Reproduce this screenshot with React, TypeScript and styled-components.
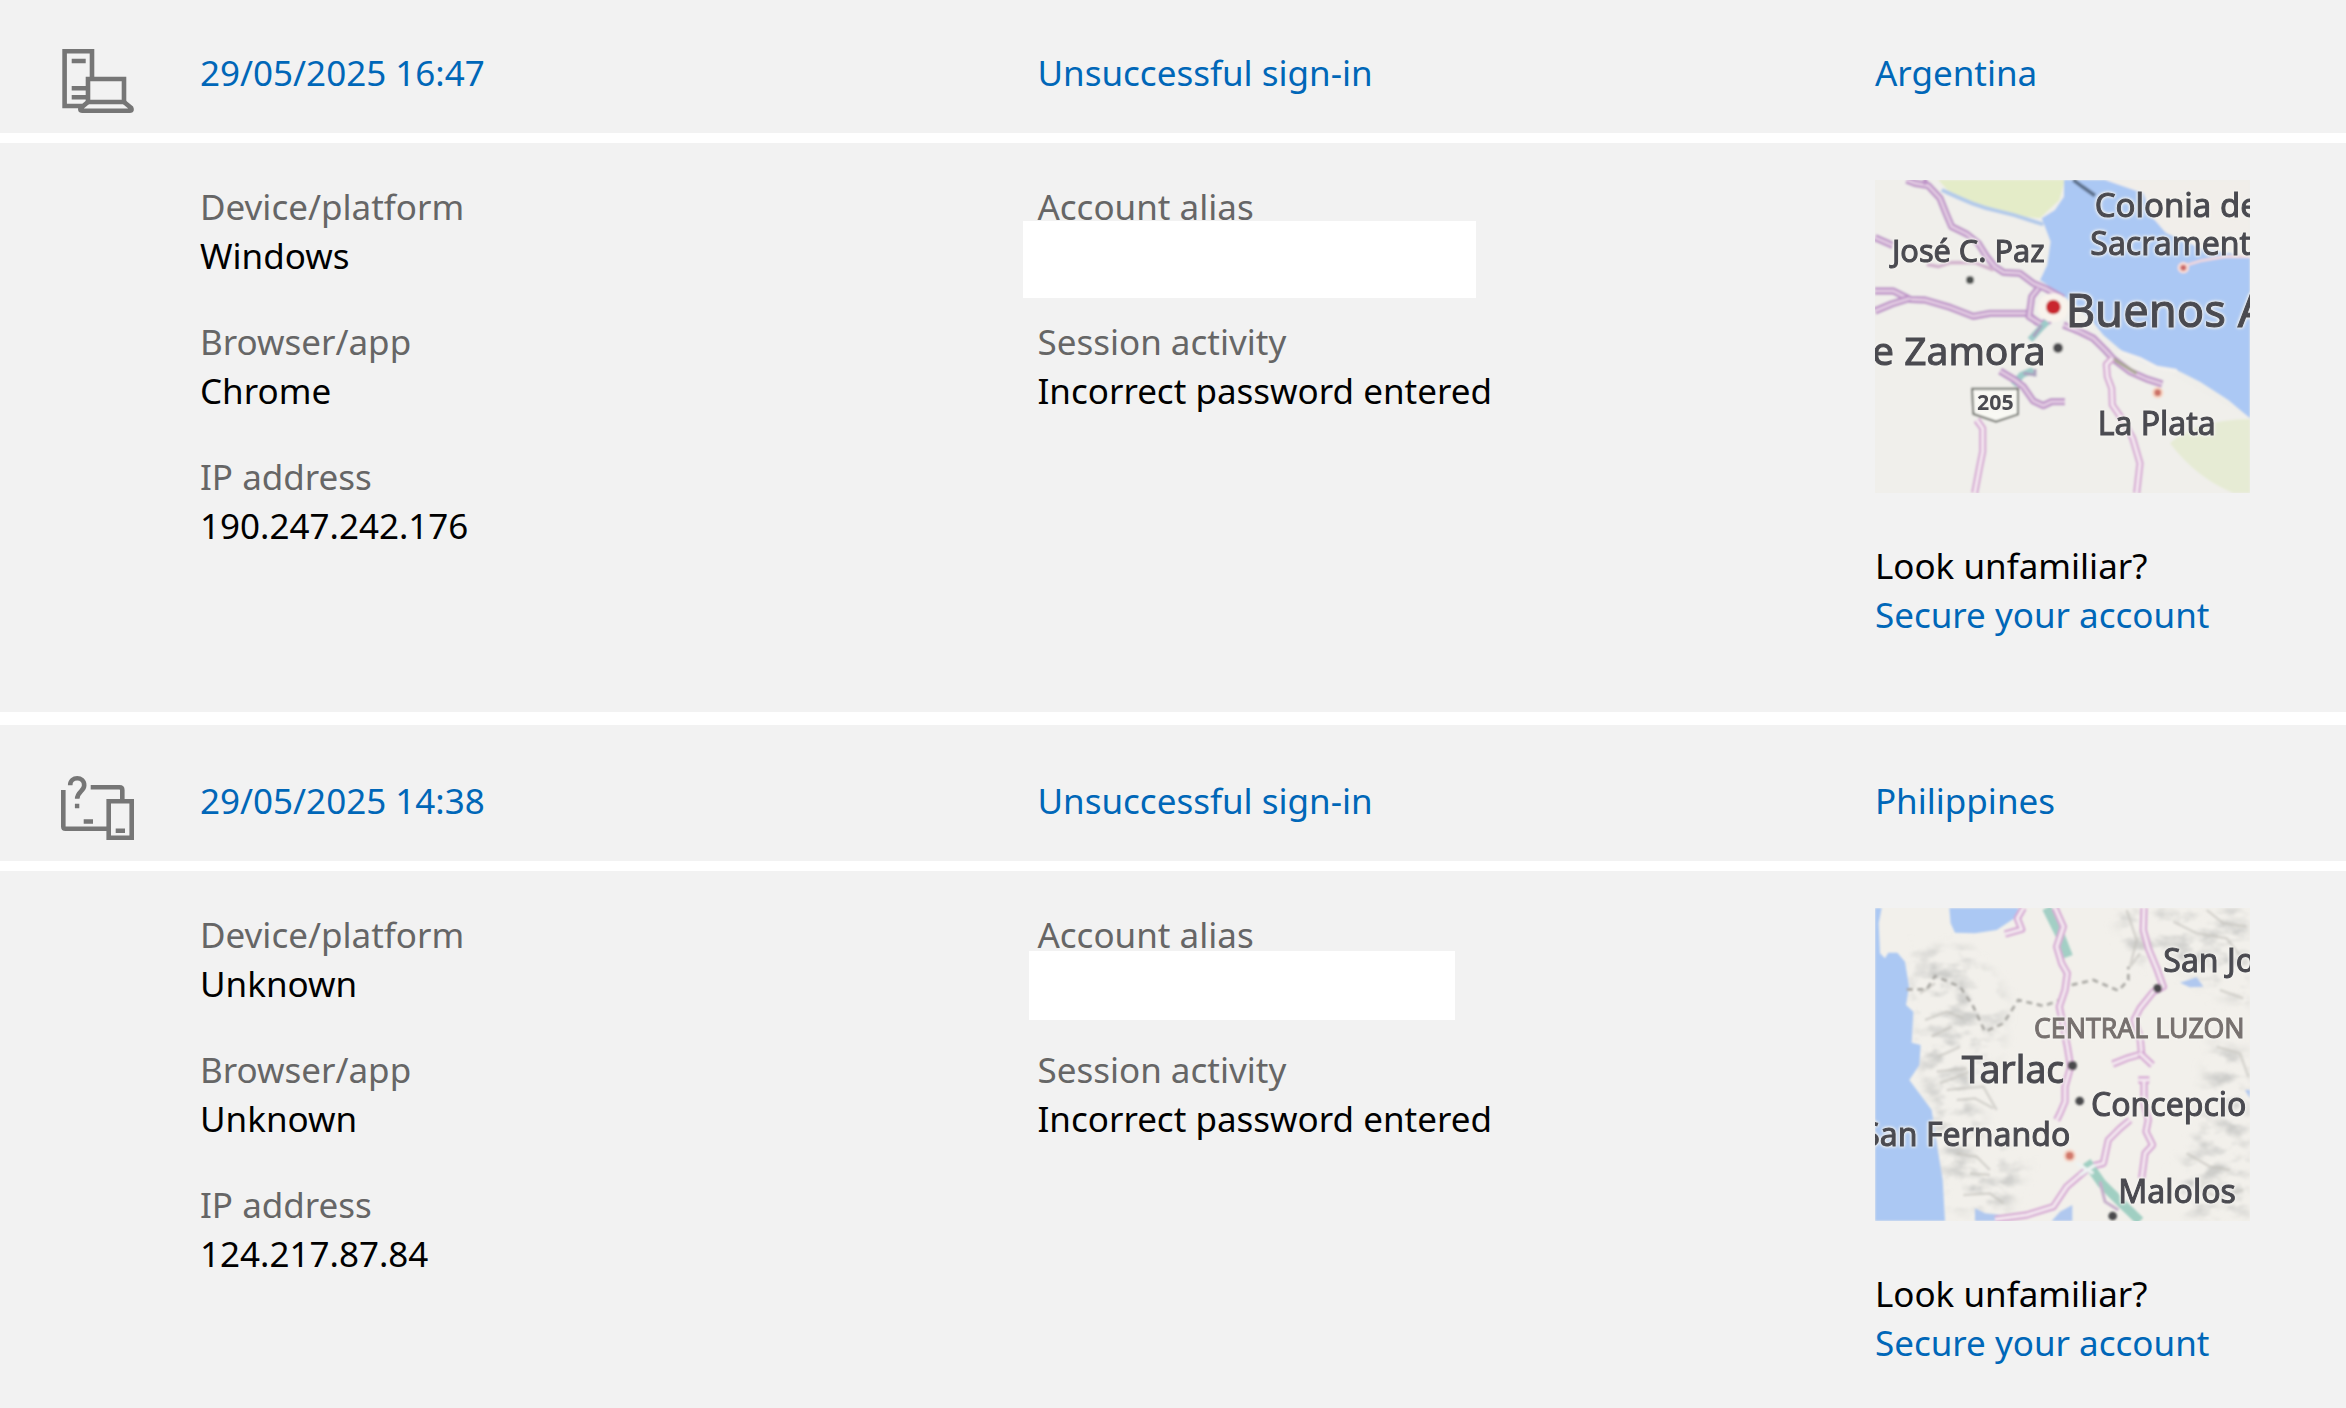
import React, { useState } from 'react';
import styled, { createGlobalStyle } from 'styled-components';

const Global = createGlobalStyle`
  * { box-sizing: border-box; }
  body {
    margin: 0;
    background: #ffffff;
    color: #000000;
    font-family: "Noto Sans", "Segoe UI", sans-serif;
    font-size: 35px;
    line-height: 49px;
  }
`;

const ActivityList = styled.main`
  display: flex;
  flex-direction: column;
  gap: 13px;
  height: 100vh;
  overflow: hidden;
`;

const Entry = styled.article`
  display: flex;
  flex-direction: column;
  gap: 10px;
  flex: none;

  &:first-child { margin-top: -3px; }
`;

const columns = `
  display: grid;
  grid-template-columns: 200px 16fr 16fr 9fr;
`;

const Summary = styled.button`
  ${columns}
  width: 100%;
  min-height: 136px;
  padding: 49px 0 0;
  align-items: start;
  align-content: start;
  border: 0;
  background: #f2f2f2;
  color: #0067b8;
  font: inherit;
  text-align: left;
  cursor: pointer;
`;

const SummaryText = styled.span`
  padding-top: 2px;
`;

const DeviceIcon = styled.svg`
  display: block;
  width: 76px;
  height: 68px;
  margin-left: 60px;
  fill: none;
  stroke: #767676;
  stroke-width: 4.6;
`;

const Details = styled.div`
  ${columns}
  min-height: 569px;
  padding: 37px 0 48px;
  background: #f2f2f2;
`;

const Facts = styled.dl<{ $column: number }>`
  grid-column: ${(p) => p.$column};
  display: flex;
  flex-direction: column;
  gap: 37px;
  margin: 0;
  padding-top: 2px;
`;

const Fact = styled.div``;

const Term = styled.dt`
  color: #666666;
`;

const Value = styled.dd`
  position: relative;
  min-height: 49px;
  margin: 0;
`;

const Redaction = styled.span<{ $left: number; $top: number; $w: number; $h: number }>`
  position: absolute;
  left: ${(p) => p.$left}px;
  top: ${(p) => p.$top}px;
  width: ${(p) => p.$w}px;
  height: ${(p) => p.$h}px;
  background: #ffffff;
`;

const Place = styled.section`
  grid-column: 4;
  display: flex;
  flex-direction: column;
  align-items: flex-start;
  gap: 48px;
`;

const MapView = styled.svg`
  display: block;
  width: 375px;
  height: 313px;
`;

const MapLabel = styled.text<{ $muted?: boolean; $bold?: boolean }>`
  font-family: "Noto Sans", "Segoe UI", sans-serif;
  font-weight: ${(p) => (p.$bold ? 700 : 400)};
  fill: ${(p) => (p.$muted ? '#77716f' : '#4a4a50')};
  stroke: ${(p) => (p.$muted ? '#77716f' : '#4a4a50')};
  stroke-width: ${(p) => (p.$bold ? 0 : 3)};
  filter: drop-shadow(0 0 5px #f5f4f0) drop-shadow(0 0 4px #f5f4f0);
`;

const Advice = styled.p`
  display: flex;
  flex-direction: column;
  margin: 0;
`;

const SecureLink = styled.a`
  color: #0067b8;
  text-decoration: none;
  &:hover { text-decoration: underline; }
`;

function ComputerIcon() {
  return (
    <DeviceIcon viewBox="0 0 76 68" aria-hidden="true">
      <path d="M32 31V5.3H4.6V60H22" />
      <path d="M11.7 15H25.7M11.7 42.3H27M11.7 51.3H27" />
      <path d="M28 56V33H64V56Z" />
      <path d="M28 56L20.5 62.2Q19.5 64.7 22 64.7H70Q72.5 64.7 71.2 62L64 56" />
    </DeviceIcon>
  );
}

function UnknownIcon() {
  return (
    <DeviceIcon viewBox="0 0 76 68" aria-hidden="true">
      <path d="M3.3 16V52.5Q3.3 54.7 5.5 54.7H48" />
      <path d="M30.7 13.3H59.5Q62.3 13.3 62.3 16V26" />
      <path d="M48.7 27.3H71.7V63.7H48.7Z" />
      <path d="M23.7 47.5H33M55.7 56.7H65M14.9 32H19.3" />
      <path d="M10.2 11.2C10.2 2 24.2 2 24.2 11.2C24.2 17.3 17.2 17.5 17.2 24.8" />
    </DeviceIcon>
  );
}

function Road({ d, light }: { d: string; light?: boolean }) {
  return (
    <g fill="none" strokeLinejoin="round">
      <path d={d} stroke={light ? '#d6a9d3' : '#bd93c7'} strokeWidth={22} />
      <path d={d} stroke={light ? '#f5eaf1' : '#e2cbe2'} strokeWidth={9} />
    </g>
  );
}

function BuenosAiresMap() {
  return (
    <MapView viewBox="45 45 1125 939" role="img" aria-label="Map of Buenos Aires">
      <defs>
        <filter id="softA" x="0" y="0" width="100%" height="100%">
          <feGaussianBlur stdDeviation="2.5" />
        </filter>
      </defs>
      <rect x="45" y="45" width="1125" height="939" fill="#efeeea" />
      <g filter="url(#softA)">
        <path d="M45 45H612L570 165L548 320L610 400L640 520L880 600L1170 760V984H45Z" fill="#f0efeb" />
        <path d="M235 45H615L598 105L540 160L440 150L330 115L262 75Z" fill="#e4ecc8" />
        <path d="M930 835Q1000 765 1170 762V984H1120Q1010 940 930 835Z" fill="#e6ebd4" />
        <path d="M612 45H760L800 66L850 80L880 160L920 205L1020 250L1170 275V760L1105 705L1020 650L950 615L890 612L800 570L730 510L690 460L620 400L540 345L562 300L572 230L545 160L585 135L612 95Z" fill="#abc8f4" />
        <path d="M735 45H1170V270L1010 235L915 200L880 160L850 85Z" fill="#f1eeea" />
        <path d="M245 75C300 100 350 125 420 140S500 165 550 178" fill="none" stroke="#b3caea" strokeWidth="12" />
        <path d="M640 45L668 66L705 92" fill="none" stroke="#5d718c" strokeWidth="12" />
        <path d="M965 305L1020 288L1095 275H1170" fill="none" stroke="#f1d7dc" strokeWidth="8" />
        <Road d="M140 45L165 55L205 62L240 100L258 145L275 185L320 207L355 235L380 275L405 305L430 322L480 325L520 355L560 372L610 400" />
        <path d="M200 55L190 45" stroke="#bd93c7" strokeWidth="16" />
        <Road d="M45 218L100 242" />
        <path d="M200 298L235 305L270 293H345L400 315" fill="none" stroke="#d3b4ce" strokeWidth="11" />
        <Road d="M45 378H100L150 403L195 405L270 427L340 454L390 445H500L535 475" />
        <Road d="M45 438L95 417L150 400" />
        <Road d="M535 370L515 395L507 455L545 478L570 465" />
        <path d="M562 470L540 492L510 525M520 615L485 630L460 660" fill="none" stroke="#9ccbc9" strokeWidth="20" />
        <path d="M545 480L520 515M525 612V630L490 625" fill="none" stroke="#aaa1be" strokeWidth="9" />
        <Road d="M420 618L465 645L490 665L520 708L550 722L575 710H615" />
        <Road d="M610 480L660 500L700 520L735 555L760 582L810 620L860 642L907 657" />
        <path d="M760 582L830 625" stroke="#aaa995" strokeWidth="10" />
        <Road light d="M757 580L739 598L742 635L755 670L757 720L785 760L818 820L840 895L830 984" />
        <Road light d="M350 765L368 790V860L358 910L344 984" />
        <path d="M775 560L840 582L890 608L950 618" fill="none" stroke="#f3f1ed" strokeWidth="12" />
        <ellipse cx="580" cy="428" rx="46" ry="43" fill="#f8f3ec" />
        <circle cx="580" cy="426" r="22" fill="#c9262d" />
        <circle cx="970" cy="308" r="17" fill="#faddd6" />
        <circle cx="970" cy="308" r="9" fill="#cb6968" />
        <circle cx="893" cy="683" r="17" fill="#f8d4c2" />
        <circle cx="893" cy="683" r="10" fill="#cc7267" />
        <circle cx="330" cy="345" r="12" fill="#4e5150" />
        <circle cx="594" cy="549" r="15" fill="#4b4b4e" />
        <path d="M336 671H474V748L408 770L340 747Z" fill="#f9f9f4" stroke="#62665f" strokeWidth="6" />
      </g>
      <MapLabel x="704" y="156" fontSize="99">Colonia de</MapLabel>
      <MapLabel x="691" y="270" fontSize="96">Sacrament</MapLabel>
      <MapLabel x="96" y="291" fontSize="92">José C. Paz</MapLabel>
      <MapLabel x="617" y="486" fontSize="136">Buenos A</MapLabel>
      <MapLabel x="557" y="600" fontSize="117" textAnchor="end">e Zamora</MapLabel>
      <MapLabel $bold x="406" y="734" fontSize="64" textAnchor="middle">205</MapLabel>
      <MapLabel x="713" y="810" fontSize="96">La Plata</MapLabel>
    </MapView>
  );
}

function LuzonMap() {
  return (
    <MapView viewBox="45 54 1125 939" role="img" aria-label="Map of Central Luzon">
      <defs>
        <filter id="softB" x="0" y="0" width="100%" height="100%">
          <feGaussianBlur stdDeviation="2.5" />
        </filter>
        <filter id="relief" x="0" y="0" width="100%" height="100%">
          <feTurbulence type="fractalNoise" baseFrequency="0.012 0.022" numOctaves="4" seed="8" />
          <feColorMatrix values="0 0 0 0 0.62  0 0 0 0 0.62  0 0 0 0 0.6  3.4 0 0 0 -1.5" />
        </filter>
        <filter id="feather">
          <feGaussianBlur stdDeviation="20" />
        </filter>
        <mask id="hills">
          <path d="M150 180L330 170L430 310L420 480L330 620L380 720L500 830L440 960L270 960L230 740L190 560L150 330ZM770 54H1170V360L1060 300L900 190L810 240ZM1060 450L1170 490V990H1000L940 880L1000 740Z" fill="#ffffff" filter="url(#feather)" />
        </mask>
      </defs>
      <rect x="45" y="54" width="1125" height="939" fill="#f2f0eb" />
      <g filter="url(#softB)">
        <g mask="url(#hills)">
          <rect x="45" y="54" width="1125" height="939" filter="url(#relief)" />
        </g>
        <g fill="none" stroke="#c2c0ba" strokeWidth="8" opacity="0.55">
          <path d="M195 390L260 365L310 385M215 440L275 410M235 500L300 470M230 545L320 535M240 580L330 545M260 600L370 590L410 660M290 630L345 625L400 655M180 310L225 280M290 790L350 800L390 840M330 850L390 855M310 915L390 910L430 940" />
          <path d="M800 60L830 150L810 230L840 190M940 95L1010 130L1100 145L1150 210M1040 60L1090 100L1160 110M1080 300L1150 325M1070 470L1140 490L1165 560M980 790L1050 830L1110 840M1010 900L1080 920L1150 900" />
        </g>
        <path d="M268 54H475L468 82L410 120L345 130L285 128L272 100Z" fill="#abc8f3" />
        <path d="M45 54H65L56 100L60 190L75 205L85 188H112L135 215L147 290L138 345L160 365L155 458L182 465L178 525L148 570L215 660L235 790L248 870L255 993H45Z" fill="#abc8f3" />
        <path d="M345 993V955L375 970L425 975L415 993ZM575 993L600 965L637 945V993ZM960 278L1010 262L1030 290L990 292ZM1155 600H1170V625Z" fill="#b0c8ef" />
        <g fill="none" stroke="#aaa9a4" strokeWidth="8" strokeDasharray="18 14">
          <path d="M140 298H200L225 258L300 290L340 350L375 425L430 400L475 330L550 348L600 330" />
          <path d="M635 285L700 270L775 302L805 270V230" />
        </g>
        <path d="M560 54L600 135L625 200" fill="none" stroke="#a3cfc5" strokeWidth="28" />
        <Road light d="M490 54L472 85L485 118L435 132" />
        <Road light d="M585 54L610 110L590 170L605 220L622 250L615 300L598 350L610 410L622 470L632 530L615 590V635L600 670L590 690" />
        <Road light d="M852 54L850 120L865 175L890 235L910 290L880 305L840 355L822 390L840 440L845 492L800 505L758 522" />
        <Road light d="M840 490L877 525" />
        <Road light d="M835 570H868M852 570V640L865 690L858 725L878 765L855 790L845 865" />
        <Road light d="M810 690L780 715L745 750L730 820L690 830" />
        <Road light d="M690 830L620 890L580 950L500 975L405 988" />
        <path d="M680 815L725 880L780 935L840 993" fill="none" stroke="#a0cfc2" strokeWidth="28" />
        <path d="M720 875L735 935L775 960" fill="none" stroke="#c6afcb" strokeWidth="9" />
        <path d="M650 820L700 850M660 855L705 825" stroke="#eef3f2" strokeWidth="10" />
        <circle cx="629" cy="797" r="19" fill="#f6d7ca" />
        <circle cx="629" cy="797" r="12" fill="#d1786a" />
        <g fill="#48494c">
          <circle cx="893" cy="295" r="13" />
          <circle cx="637" cy="527" r="14" />
          <circle cx="659" cy="633" r="13" />
          <circle cx="758" cy="978" r="13" />
        </g>
      </g>
      <MapLabel x="910" y="247" fontSize="96">San Jo</MapLabel>
      <MapLabel $muted x="522" y="444" fontSize="80">CENTRAL LUZON</MapLabel>
      <MapLabel x="305" y="580" fontSize="112">Tarlac</MapLabel>
      <MapLabel x="693" y="678" fontSize="96">Concepcio</MapLabel>
      <MapLabel x="631" y="768" fontSize="96" textAnchor="end">San Fernando</MapLabel>
      <MapLabel x="775" y="940" fontSize="96">Malolos</MapLabel>
    </MapView>
  );
}

type Activity = {
  when: string;
  country: string;
  device: string;
  browser: string;
  ip: string;
  icon: React.ReactNode;
  map: React.ReactNode;
  cover: { $left: number; $top: number; $w: number; $h: number };
};

const activities: Activity[] = [
  {
    when: '29/05/2025 16:47',
    country: 'Argentina',
    device: 'Windows',
    browser: 'Chrome',
    ip: '190.247.242.176',
    icon: <ComputerIcon />,
    map: <BuenosAiresMap />,
    cover: { $left: -14, $top: -10, $w: 453, $h: 77 },
  },
  {
    when: '29/05/2025 14:38',
    country: 'Philippines',
    device: 'Unknown',
    browser: 'Unknown',
    ip: '124.217.87.84',
    icon: <UnknownIcon />,
    map: <LuzonMap />,
    cover: { $left: -8, $top: -8, $w: 426, $h: 69 },
  },
];

function ActivityEntry({ item }: { item: Activity }) {
  const [open, setOpen] = useState(true);
  return (
    <Entry>
      <Summary type="button" aria-expanded={open} onClick={() => setOpen(!open)}>
        {item.icon}
        <SummaryText>{item.when}</SummaryText>
        <SummaryText>Unsuccessful sign-in</SummaryText>
        <SummaryText>{item.country}</SummaryText>
      </Summary>
      {open && (
        <Details>
          <Facts $column={2}>
            <Fact><Term>Device/platform</Term><Value>{item.device}</Value></Fact>
            <Fact><Term>Browser/app</Term><Value>{item.browser}</Value></Fact>
            <Fact><Term>IP address</Term><Value>{item.ip}</Value></Fact>
          </Facts>
          <Facts $column={3}>
            <Fact><Term>Account alias</Term><Value><Redaction {...item.cover} /></Value></Fact>
            <Fact><Term>Session activity</Term><Value>Incorrect password entered</Value></Fact>
          </Facts>
          <Place>
            {item.map}
            <Advice>
              <span>Look unfamiliar?</span>
              <SecureLink href="#secure">Secure your account</SecureLink>
            </Advice>
          </Place>
        </Details>
      )}
    </Entry>
  );
}

export default function App() {
  return (
    <>
      <Global />
      <ActivityList>
        {activities.map((item) => (
          <ActivityEntry key={item.when} item={item} />
        ))}
      </ActivityList>
    </>
  );
}
